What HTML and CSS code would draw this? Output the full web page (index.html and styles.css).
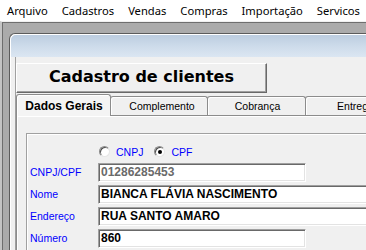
FILE: index.html
```html
<!DOCTYPE html>
<html lang="pt-BR">
<head>
<meta charset="utf-8">
<title>Cadastro de clientes</title>
<link rel="stylesheet" href="styles.css">
</head>
<body>
<div class="menubar">
  <span class="menu-item">Arquivo</span>
  <span class="menu-item">Cadastros</span>
  <span class="menu-item">Vendas</span>
  <span class="menu-item">Compras</span>
  <span class="menu-item">Importação</span>
  <span class="menu-item">Servicos</span>
</div>
<div class="mdi">
  <div class="mdi-inner">
    <div class="child">
      <div class="titlebar"></div>
      <div class="client">
        <div class="header-btn">Cadastro de clientes</div>
        <div class="tabs">
          <div class="tab tab-active">Dados Gerais</div>
          <div class="tab tab-2">Complemento</div>
          <div class="tab tab-3">Cobrança</div>
          <div class="tab tab-4">Entrega</div>
        </div>
        <div class="page">
          <div class="group">
            <div class="radios">
              <span class="radio"></span><span class="radio-label">CNPJ</span>
              <span class="radio radio-checked"></span><span class="radio-label">CPF</span>
            </div>
            <div class="row">
              <span class="label">CNPJ/CPF</span>
              <div class="input input-short input-gray">01286285453</div>
            </div>
            <div class="row">
              <span class="label">Nome</span>
              <div class="input input-long">BIANCA FLÁVIA NASCIMENTO</div>
            </div>
            <div class="row">
              <span class="label">Endereço</span>
              <div class="input input-long">RUA SANTO AMARO</div>
            </div>
            <div class="row">
              <span class="label">Número</span>
              <div class="input input-short">860</div>
            </div>
          </div>
        </div>
      </div>
    </div>
  </div>
</div>
</body>
</html>
```

FILE: styles.css
```css
html, body {
  margin: 0;
  padding: 0;
  overflow: hidden;
  width: 366px;
  height: 250px;
}
body {
  background: #ababab;
  font-family: "Liberation Sans", Arial, sans-serif;
}
.menubar {
  height: 21px;
  background: #ffffff;
  display: flex;
  box-sizing: border-box;
  padding-top: 1px;
  font-family: "Noto Sans", "Open Sans", sans-serif;
  font-size: 11.2px;
  line-height: 20px;
  color: #000;
  white-space: nowrap;
}
.menu-item {
  padding: 0 7px;
}
.mdi {
  background: #ababab;
  border-top: 1px solid #f0f0f0;
  border-left: 2px solid #c4c4c4;
  height: 240px;
}
.mdi-inner {
  border-top: 1px solid #6e6e6e;
  border-left: 1px solid #6e6e6e;
  height: 240px;
  padding-top: 10px;
  padding-left: 6px;
}
.child {
  width: 440px;
  height: 260px;
  background: #f0f0f0;
  border-top: 1px solid #5c5c5c;
  border-left: 1px solid #5c5c5c;
  border-top-left-radius: 6px;
  box-shadow: inset 1px 1px 0 #ffffff;
  overflow: hidden;
}
.titlebar {
  height: 22px;
  margin: 1px 0 0 1px;
  border-top-left-radius: 5px;
  background: linear-gradient(to bottom, #bccde0 0%, #cddbea 50%, #dbe6f2 100%);
}
.client {
  margin-left: 5px;
  border-left: 1px solid #a0a0a0;
  padding-top: 6px;
  height: 220px;
}
.header-btn {
  width: 251px;
  height: 30px;
  box-sizing: border-box;
  border: 1px solid;
  border-color: #ffffff #696969 #696969 #ffffff;
  box-shadow: inset -1px -1px 0 #a0a0a0;
  background: #f0f0f0;
  font-family: "DejaVu Sans", Verdana, sans-serif;
  font-weight: bold;
  font-size: 16px;
  line-height: 26px;
  text-align: center;
  color: #000;
  margin-bottom: 1px;
}
.tabs {
  display: flex;
  align-items: flex-start;
  height: 21px;
}
.tab {
  box-sizing: border-box;
  border: 1px solid #8c8c8c;
  border-bottom: none;
  border-radius: 3px 3px 0 0;
  background: #f0f0f0;
  box-shadow: inset 1px 1px 0 #ffffff;
  text-align: center;
  color: #000;
  white-space: nowrap;
  line-height: 14px;
  flex: none;
}
.tab-active {
  width: 95px;
  height: 22px;
  padding-top: 4px;
  font-weight: bold;
  font-size: 12px;
  position: relative;
  z-index: 1;
  padding-left: 1px;
  background: #f4f4f4;
}
.tab-2, .tab-3, .tab-4 {
  height: 19px;
  margin-top: 2px;
  margin-left: -1px;
  padding-top: 2px;
  font-size: 10.5px;
}
.tab-2 { width: 98px; padding-left: 6px; }
.tab-3 { width: 99px; padding-left: 2px; }
.tab-4 { width: 99px; padding-left: 2px; }
.page {
  border-top: 1px solid #8c8c8c;
  border-left: 1px solid #8c8c8c;
  box-shadow: inset 1px 1px 0 #ffffff;
  padding: 17px 0 0 9px;
  height: 200px;
  background: #f0f0f0;
}
.group {
  border-top: 1px solid #a0a0a0;
  border-left: 1px solid #a0a0a0;
  box-shadow: inset 1px 1px 0 #ffffff;
  padding: 10px 0 0 3px;
  height: 200px;
}
.radios {
  display: flex;
  align-items: center;
  height: 15px;
  margin-left: 69px;
  margin-bottom: 4px;
  font-size: 10.5px;
  color: #0000ff;
}
.radio {
  width: 11px;
  height: 11px;
  box-sizing: border-box;
  border-radius: 50%;
  border: 1px solid;
  border-color: #8a8a8a #e6e6e6 #e6e6e6 #8a8a8a;
  background: #ffffff;
  box-shadow: inset 1px 1px 0 #505050;
  display: flex;
  align-items: center;
  justify-content: center;
  flex: none;
}
.radio-checked::after {
  content: "";
  width: 4px;
  height: 4px;
  border-radius: 50%;
  background: #000;
}
.radio-label {
  margin-left: 6px;
  margin-right: 11px;
}
.row {
  display: flex;
  align-items: center;
  height: 19px;
  margin-bottom: 3px;
}
.label {
  width: 68px;
  flex: none;
  font-size: 10.5px;
  color: #0000ff;
  line-height: 19px;
}
.input {
  height: 19px;
  box-sizing: border-box;
  border: 1px solid;
  border-color: #a0a0a0 #ffffff #ffffff #a0a0a0;
  box-shadow: inset 1px 1px 0 #696969, inset -1px -1px 0 #e3e3e3;
  background: #ffffff;
  padding: 0 2px;
  font-size: 12px;
  font-weight: bold;
  line-height: 17px;
  color: #000;
  white-space: nowrap;
  flex: none;
}
.input-short { width: 208px; }
.input-long { width: 320px; }
.input-gray {
  color: #6a6a6a;
}
```
